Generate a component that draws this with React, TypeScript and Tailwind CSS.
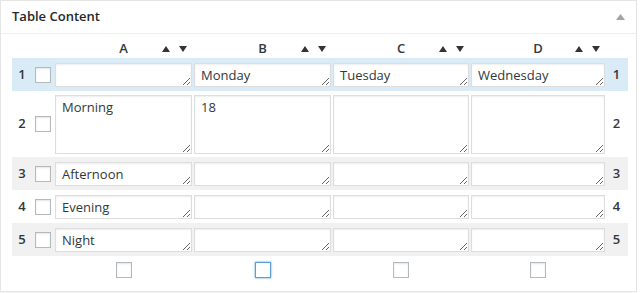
import React from "react";

const font = { fontFamily: '"Open Sans", "Liberation Sans", sans-serif' };

const columns = ["A", "B", "C", "D"];
const colWidths = ["w-[137px]", "w-[137px]", "w-[136px]", "w-[134px]"];

const rows: { cells: string[]; tall?: boolean; bg: string }[] = [
  { cells: ["", "Monday", "Tuesday", "Wednesday"], bg: "bg-[#d9ebf6]" },
  { cells: ["Morning", "18", "", ""], tall: true, bg: "bg-white" },
  { cells: ["Afternoon", "", "", ""], bg: "bg-[#f1f1f1]" },
  { cells: ["Evening", "", "", ""], bg: "bg-white" },
  { cells: ["Night", "", "", ""], bg: "bg-[#f1f1f1]" },
];

const Checkbox = ({ focused }: { focused?: boolean }) => (
  <div
    className={
      focused
        ? "w-[16px] h-[16px] bg-white border border-[#5b9dd9] shadow-[0_0_2px_rgba(30,140,190,0.8)]"
        : "w-[16px] h-[16px] bg-white border border-[#b4b9be] shadow-[inset_0_1px_2px_rgba(0,0,0,0.1)]"
    }
  />
);

const Cell = ({ value, tall, width }: { value: string; tall?: boolean; width: string }) => (
  <textarea
    readOnly
    defaultValue={value}
    className={`${width} ${tall ? "h-[59px]" : "h-[24px]"} block shrink-0 bg-white border border-[#dddddd] shadow-[inset_0_1px_2px_rgba(0,0,0,0.07)] px-[6px] py-[2px] text-[13px] leading-[18px] text-[#32373c] overflow-hidden outline-none`}
    style={font}
  />
);

export default function App() {
  return (
    <div className="w-[640px] h-[293px] bg-white" style={font}>
      <div className="w-[637px] h-[292px] border border-[#e5e5e5] bg-white shadow-[0_1px_1px_rgba(0,0,0,0.04)] flex flex-col">
        {/* header */}
        <div className="h-[33px] shrink-0 flex items-center justify-between pl-[11px] pr-[10px] border-b border-[#eeeeee]">
          <h2 className="text-[13px] font-semibold text-[#23282d]">Table Content</h2>
          <svg width="9" height="6" viewBox="0 0 9 6" className="mr-[1px]">
            <polygon points="4.5,0 9,6 0,6" fill="#a0a5aa" />
          </svg>
        </div>

        <div className="pt-[6px] pl-[11px] w-[627px]">
          {/* column letters */}
          <div className="flex h-[18px] items-center">
            <div className="w-[43px] shrink-0" />
            {columns.map((c, i) => (
              <div key={c} className={`${colWidths[i]} shrink-0 flex items-center ${i > 0 ? "ml-[2px]" : ""}`}>
                <div className="w-[32px]" />
                <span className="flex-1 text-center text-[13px] font-semibold text-[#32373c]">{c}</span>
                <div className="w-[32px] flex items-center gap-[9px] pr-[5px] justify-end">
                  <svg width="8" height="6" viewBox="0 0 8 6">
                    <polygon points="4,0 8,6 0,6" fill="#333" />
                  </svg>
                  <svg width="8" height="6" viewBox="0 0 8 6">
                    <polygon points="0,0 8,0 4,6" fill="#333" />
                  </svg>
                </div>
              </div>
            ))}
          </div>

          {/* rows */}
          {rows.map((r, ri) => (
            <div key={ri} className={`flex items-center ${r.tall ? "h-[66px]" : "h-[33px]"} ${r.bg}`}>
              <div className="w-[20px] shrink-0 text-center text-[13px] font-semibold text-[#32373c]">{ri + 1}</div>
              <div className="w-[23px] shrink-0 pl-[3px]">
                <Checkbox />
              </div>
              {r.cells.map((v, ci) => (
                <div key={ci} className={ci > 0 ? "ml-[2px]" : ""}>
                  <Cell value={v} tall={r.tall} width={colWidths[ci]} />
                </div>
              ))}
              <div className="w-[23px] shrink-0 text-center text-[13px] font-semibold text-[#32373c]">{ri + 1}</div>
            </div>
          ))}

          {/* column checkboxes */}
          <div className="flex h-[27px] items-center">
            <div className="w-[43px] shrink-0" />
            {columns.map((c, i) => (
              <div key={c} className={`${colWidths[i]} shrink-0 flex justify-center ${i > 0 ? "ml-[2px]" : ""}`}>
                <Checkbox focused={i === 1} />
              </div>
            ))}
          </div>
        </div>
      </div>
    </div>
  );
}
